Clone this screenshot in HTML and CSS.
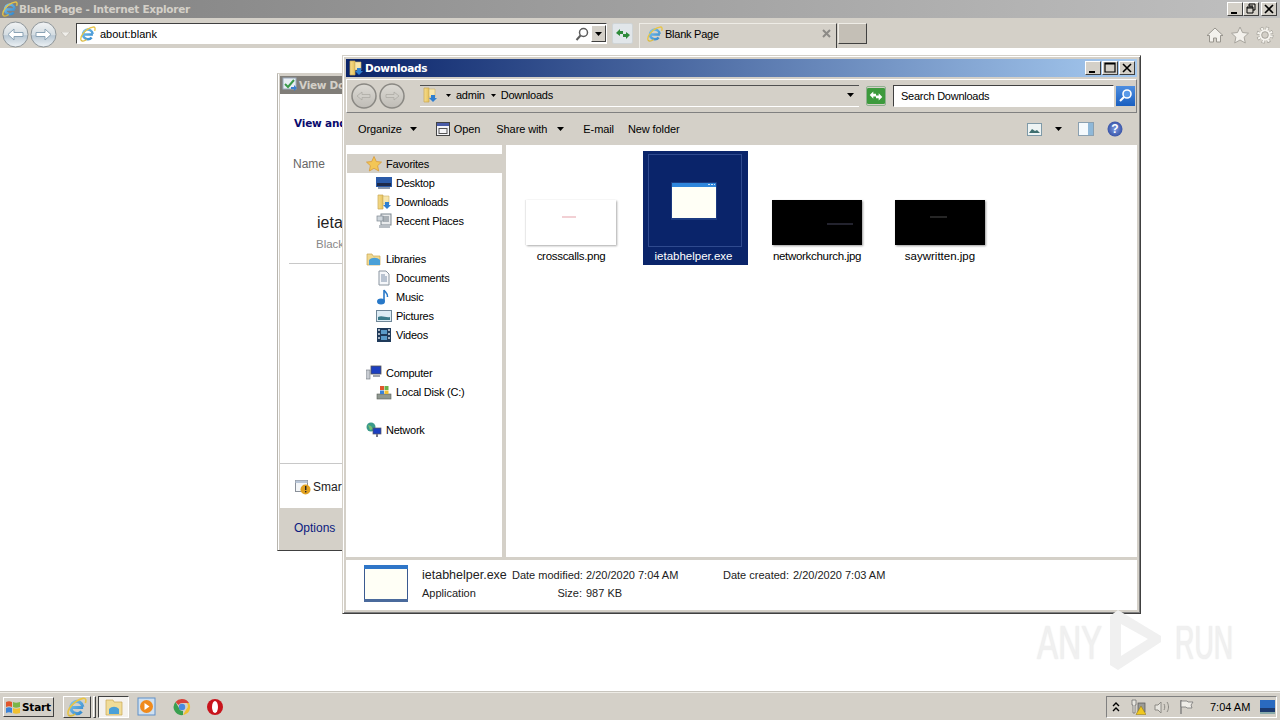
FILE: index.html
```html
<!DOCTYPE html>
<html lang="en">
<head>
<meta charset="utf-8">
<title>Blank Page - Internet Explorer</title>
<link rel="stylesheet" href="styles.css">
</head>
<body>
<svg class="defs" aria-hidden="true">
  <defs>
    <linearGradient id="navg" x1="0" y1="0" x2="0" y2="1"><stop offset="0" stop-color="#f2f4f5"/><stop offset=".5" stop-color="#d5dde2"/><stop offset=".55" stop-color="#b9c8d4"/><stop offset="1" stop-color="#eef3f6"/></linearGradient>
    <linearGradient id="navd" x1="0" y1="0" x2="0" y2="1"><stop offset="0" stop-color="#dcdad4"/><stop offset="1" stop-color="#bfbcb6"/></linearGradient>
    <linearGradient id="blueb" x1="0" y1="0" x2="0" y2="1"><stop offset="0" stop-color="#4d8ee0"/><stop offset="1" stop-color="#1a5fc0"/></linearGradient>
    <linearGradient id="folderg" x1="0" y1="0" x2="1" y2="0"><stop offset="0" stop-color="#f5dc8e"/><stop offset="1" stop-color="#e8c35c"/></linearGradient>
    <linearGradient id="ieg" x1="0" y1="0" x2="1" y2="1"><stop offset="0" stop-color="#7cc4ee"/><stop offset="1" stop-color="#2f86cc"/></linearGradient>
    <radialGradient id="helpg"><stop offset="0" stop-color="#7d9be0"/><stop offset="1" stop-color="#3a55a8"/></radialGradient>
    <symbol id="ie" viewBox="0 0 18 18">
      <path d="M4 9.500h10.500M14.300 8.800a5.500 5.500 0 1 0-1.200 4.200" fill="none" stroke="url(#ieg)" stroke-width="2.800"/>
      <path d="M1.200 16C-.5 12 6 3 14.500 1.200c2.300-.5 3 1.300 2 4.300" fill="none" stroke="#e8c547" stroke-width="1.500"/>
      <path d="M1.200 16c1.200 1.700 4 .8 6.300-.8" fill="none" stroke="#d9b93e" stroke-width="1.500"/>
    </symbol>
    <symbol id="folder-dl" viewBox="0 0 16 16">
      <path d="M2 1h5v14H2z" fill="url(#folderg)" stroke="#c8a850" stroke-width=".7"/>
      <path d="M7 2h6v8H7z" fill="#f7e6ad" stroke="#cdb168" stroke-width=".6"/>
      <path d="M9 8h4v3h2l-4 4-4-4h2z" fill="#2f7fd0"/>
    </symbol>
    <symbol id="star" viewBox="0 0 16 16"><path d="M8 .5l2.300 5 5.200.6-3.900 3.600 1.100 5.300L8 12.300 3.300 15l1.100-5.300L.5 6.100l5.200-.6z" fill="#f3c655" stroke="#d89a3a" stroke-width=".8"/></symbol>
    <symbol id="caret" viewBox="0 0 7 4"><path d="M0 0h7L3.500 4z" fill="#000"/></symbol>
  </defs>
</svg>

<div class="ie">
  <header class="ie-title">
    <svg class="i16"><use href="#ie"/></svg>
    <span class="ie-title-text">Blank Page - Internet Explorer</span>
    <div class="caption ie-caption">
      <span class="cap-btn"><svg viewBox="0 0 14 12"><rect x="3" y="9" width="6" height="2"/></svg></span>
      <span class="cap-btn"><svg viewBox="0 0 14 12"><path d="M5 1h6v6H9M5 1v2h4v0M3 4h6v6H3zM3 5h6" fill="none" stroke="#000"/></svg></span>
      <span class="cap-btn cap-close"><svg viewBox="0 0 14 12"><path d="M3 2l8 8M11 2l-8 8" stroke="#000" stroke-width="1.600"/></svg></span>
    </div>
  </header>

  <div class="ie-bar">
    <div class="nav-pair">
      <svg class="nav-btn" viewBox="0 0 27 27"><circle cx="13.500" cy="13.500" r="12.500" fill="url(#navg)" stroke="#8f969a"/><path d="M6 13.500l6-5.500v3.500h9v4h-9V19z" fill="#fff" stroke="#8ba3b5"/></svg>
      <svg class="nav-btn" viewBox="0 0 27 27"><circle cx="13.500" cy="13.500" r="12.500" fill="url(#navg)" stroke="#8f969a"/><path d="M21 13.500l-6-5.500v3.500H6v4h9V19z" fill="#fff" stroke="#8ba3b5"/></svg>
      <svg class="nav-drop" viewBox="0 0 9 5"><path d="M0 0h9L4.500 5z" fill="#f0eeea" stroke="#b0aca4" stroke-width=".5"/></svg>
    </div>
    <div class="ie-addr">
      <svg class="i16 addr-ie"><use href="#ie"/></svg>
      <span class="addr-text">about:blank</span>
      <svg class="addr-search" viewBox="0 0 14 14"><circle cx="8.500" cy="5.500" r="4" fill="none" stroke="#5c5c5c" stroke-width="1.500"/><path d="M5.500 8.500L1.500 13" stroke="#5c5c5c" stroke-width="2"/></svg>
      <span class="addr-drop"><svg class="caret" viewBox="0 0 7 4"><use href="#caret"/></svg></span>
    </div>
    <span class="ie-refresh">
      <svg viewBox="0 0 16 12"><path d="M1 5l4-4v2h3v3H5v2zM15 7l-4 4V9H8V6h3V4z" fill="#2e8b3a"/></svg>
    </span>
    <div class="ie-tab">
      <svg class="i16 tab-ie"><use href="#ie"/></svg>
      <span class="tab-text">Blank Page</span>
      <svg class="tab-x" viewBox="0 0 9 9"><path d="M1 1l7 7M8 1L1 8" stroke="#8c8a86" stroke-width="2"/></svg>
    </div>
    <span class="ie-newtab"></span>
    <div class="ie-tools">
      <svg viewBox="0 0 18 18"><path d="M9 2L1 9.500h2.500V16h4v-4h3v4h4V9.500H17z" fill="#f3f1ec" stroke="#98958e"/></svg>
      <svg viewBox="0 0 18 18"><path d="M9 1l2.500 5.500 6 .7-4.400 4 1.200 5.800L9 14l-5.300 3 1.200-5.800-4.400-4 6-.7z" fill="#f3f1ec" stroke="#a8a59e"/></svg>
      <svg viewBox="0 0 18 18"><circle cx="9" cy="9" r="6.500" fill="none" stroke="#9c9992" stroke-width="4" stroke-dasharray="2.800 2.300"/><circle cx="9" cy="9" r="6.500" fill="none" stroke="#f6f4ef" stroke-width="2.800" stroke-dasharray="2 3.100" stroke-dashoffset="-.4"/><circle cx="9" cy="9" r="4.500" fill="none" stroke="#f6f4ef" stroke-width="2"/><circle cx="9" cy="9" r="3.300" fill="none" stroke="#9c9992" stroke-width=".8"/></svg>
    </div>
  </div>

  <main class="desktop">
    <section class="win view-win">
      <div class="view-title">
        <svg class="i16" viewBox="0 0 16 16"><rect x="1" y="1" width="13" height="11" fill="#e8eef4" stroke="#9ab"/><path d="M3 7l3 3 6-7" fill="none" stroke="#3a9a4a" stroke-width="2"/><path d="M9 10h3v-2l3 3-3 3v-2H9z" fill="#3a7fd0"/></svg>
        <span>View Do</span>
      </div>
      <div class="view-body">
        <h2 class="view-head">View and</h2>
        <div class="view-col">Name</div>
        <div class="view-item">
          <div class="view-name">ieta</div>
          <div class="view-src">Black</div>
        </div>
        <div class="view-spacer"></div>
        <div class="view-smart">
          <svg class="i16" viewBox="0 0 16 16"><rect x=".5" y="1.500" width="12" height="11" fill="#f4f6f8" stroke="#8a9099"/><rect x=".5" y="1.500" width="12" height="2.500" fill="#b9c6d8"/><circle cx="10.500" cy="10.500" r="5" fill="#e0a020"/><rect x="10" y="7" width="1.400" height="4" fill="#222"/><rect x="10" y="12" width="1.400" height="1.400" fill="#222"/></svg>
          <span>Smar</span>
        </div>
        <div class="view-foot">Options</div>
      </div>
    </section>

    <section class="win explorer">
      <div class="ex-title">
        <svg class="i16"><use href="#folder-dl"/></svg>
        <span class="ex-title-text">Downloads</span>
        <div class="caption ex-caption">
          <span class="cap-btn"><svg viewBox="0 0 14 12"><rect x="3" y="9" width="6" height="2"/></svg></span>
          <span class="cap-btn"><svg viewBox="0 0 14 12"><path d="M2 1h10v9H2zM2 2h10" fill="none" stroke="#000" stroke-width="1.200"/></svg></span>
          <span class="cap-btn cap-close"><svg viewBox="0 0 14 12"><path d="M3 2l8 8M11 2l-8 8" stroke="#000" stroke-width="1.600"/></svg></span>
        </div>
      </div>

      <div class="ex-nav">
        <div class="ex-backfwd">
          <svg class="ex-nb" viewBox="0 0 26 26"><circle cx="13" cy="13" r="12" fill="url(#navd)" stroke="#8a8883" stroke-width="1.500"/><path d="M6 13l5-4v2.500h8v3h-8V17z" fill="#d0cec8" stroke="#a9a7a1" stroke-width=".7"/></svg>
          <svg class="ex-nb" viewBox="0 0 26 26"><circle cx="13" cy="13" r="12" fill="url(#navd)" stroke="#8a8883" stroke-width="1.500"/><path d="M20 13l-5-4v2.500H7v3h8V17z" fill="#d0cec8" stroke="#a9a7a1" stroke-width=".7"/></svg>
        </div>
        <div class="ex-addr">
          <svg class="i16 crumb-ic"><use href="#folder-dl"/></svg>
          <svg class="caret-s" viewBox="0 0 7 4"><use href="#caret"/></svg>
          <span class="crumb">admin</span>
          <svg class="caret-s" viewBox="0 0 7 4"><use href="#caret"/></svg>
          <span class="crumb">Downloads</span>
          <svg class="caret crumb-drop" viewBox="0 0 7 4"><use href="#caret"/></svg>
        </div>
        <span class="ex-refresh"><svg viewBox="0 0 20 18"><rect width="20" height="18" rx="1.500" fill="#3d9a3d"/><path d="M3 8l4-4v2.500h3v3H7V12zM17 10l-4 4v-2.500h-3v-3h3V6z" fill="#fff"/></svg></span>
        <div class="ex-search">Search Downloads</div>
        <span class="ex-sbtn"><svg viewBox="0 0 19 20"><rect width="19" height="20" fill="url(#blueb)"/><circle cx="11" cy="8" r="4" fill="#5a9ae8" stroke="#fff" stroke-width="1.600"/><path d="M8 11l-4 4" stroke="#fff" stroke-width="2.200"/></svg></span>
      </div>

      <div class="ex-cmd">
        <span class="cmd cmd-org">Organize</span><svg class="caret cmd-c1" viewBox="0 0 7 4"><use href="#caret"/></svg>
        <svg class="cmd-open" viewBox="0 0 14 14"><rect x=".5" y=".5" width="13" height="13" fill="#f5f5f8" stroke="#444"/><rect x="1" y="1" width="12" height="3" fill="#4a5ca8"/><rect x="3" y="6.500" width="8" height="5" fill="none" stroke="#555"/></svg>
        <span class="cmd cmd-o">Open</span>
        <span class="cmd cmd-s">Share with</span><svg class="caret cmd-c2" viewBox="0 0 7 4"><use href="#caret"/></svg>
        <span class="cmd cmd-e">E-mail</span>
        <span class="cmd cmd-n">New folder</span>
        <div class="cmd-right">
          <svg class="cmd-view" viewBox="0 0 15 13"><rect x=".5" y=".5" width="14" height="12" fill="#eef4f4" stroke="#7f9aa8"/><path d="M2 10l3-4 3 2 2-1 3 3z" fill="#3f6f6f"/></svg>
          <svg class="caret cmd-c3" viewBox="0 0 7 4"><use href="#caret"/></svg>
          <svg class="cmd-pane" viewBox="0 0 16 14"><rect x=".5" y=".5" width="15" height="13" fill="#f5fafd" stroke="#8ba0b0"/><rect x="10" y="1" width="5" height="12" fill="#8fb8d8"/></svg>
          <svg class="cmd-help" viewBox="0 0 16 16"><circle cx="8" cy="8" r="7.500" fill="url(#helpg)"/><text x="8" y="12" class="help-q">?</text></svg>
        </div>
      </div>

      <div class="ex-main">
        <nav class="ex-side">
          <div class="side-row side-sel l1"><svg class="i16"><use href="#star"/></svg>Favorites</div>
          <div class="side-row l2"><svg class="i16" viewBox="0 0 16 16"><rect x="0" y="2" width="16" height="10" fill="#2a5aa8"/><rect x="1" y="8" width="14" height="3" fill="#1d2a4a"/><rect x="2" y="12" width="12" height="2" fill="#8a98ac"/></svg>Desktop</div>
          <div class="side-row l2"><svg class="i16"><use href="#folder-dl"/></svg>Downloads</div>
          <div class="side-row l2"><svg class="i16" viewBox="0 0 16 16"><rect x="5" y="1" width="10" height="11" fill="#e8eaec" stroke="#7d8790"/><rect x="1" y="3" width="6" height="5" fill="#cfd6dc" stroke="#7d8790" stroke-width=".7"/><path d="M7 4h6M7 6h6M7 8h6" stroke="#6a7680"/><rect x="3" y="12" width="11" height="3" fill="#b8bec4"/></svg>Recent Places</div>
          <div class="side-gap"></div>
          <div class="side-row l1"><svg class="i16" viewBox="0 0 16 16"><path d="M1 14V3h5l1 2h7v9z" fill="#f0d890" stroke="#c8a850" stroke-width=".7"/><path d="M3 14V9c3-3 8-3 11 0v5z" fill="#4aa0d8"/></svg>Libraries</div>
          <div class="side-row l2"><svg class="i16" viewBox="0 0 16 16"><path d="M3 1h7l3 3v11H3z" fill="#f5f7fa" stroke="#8a95a0"/><path d="M5 5h4M5 7h6M5 9h6M5 11h6" stroke="#7d8fa8"/></svg>Documents</div>
          <div class="side-row l2"><svg class="i16" viewBox="0 0 16 16"><ellipse cx="5" cy="12.500" rx="4" ry="3" fill="#2878c8"/><path d="M8 12V1c1 2 4 3 3.500 7" fill="none" stroke="#2878c8" stroke-width="1.600"/></svg>Music</div>
          <div class="side-row l2"><svg class="i16" viewBox="0 0 16 16"><rect x=".5" y="2.500" width="15" height="11" fill="#dcebf4" stroke="#6f8798"/><path d="M2 12V9c4-2 8 1 12 0v3z" fill="#3a7a8a"/></svg>Pictures</div>
          <div class="side-row l2"><svg class="i16" viewBox="0 0 16 16"><rect x="1" y="1" width="14" height="14" fill="#1f3a5a"/><path d="M3 2v2M3 6v2M3 10v2M13 2v2M13 6v2M13 10v2" stroke="#d5dde5" stroke-width="1.500"/><rect x="5" y="3" width="6" height="4" fill="#5a9ac8"/><rect x="5" y="9" width="6" height="4" fill="#5a9ac8"/></svg>Videos</div>
          <div class="side-gap"></div>
          <div class="side-row l1"><svg class="i16" viewBox="0 0 16 16"><rect x="0" y="5" width="4" height="9" fill="#c8ccd2" stroke="#70767e" stroke-width=".6"/><rect x="5" y="1" width="10" height="8" fill="#1c3fc0" stroke="#555" stroke-width=".8"/><rect x="7" y="10" width="7" height="2" fill="#a0a4ac"/></svg>Computer</div>
          <div class="side-row l2"><svg class="i16" viewBox="0 0 16 16"><rect x="1" y="10" width="14" height="5" fill="#8f9890" stroke="#5a6058" stroke-width=".6"/><rect x="4" y="2" width="4" height="4" fill="#e0562c"/><rect x="8.500" y="2" width="4" height="4" fill="#6ab04a"/><rect x="4" y="6.500" width="4" height="3.500" fill="#3a82d8"/><rect x="8.500" y="6.500" width="4" height="3.500" fill="#f0c030"/></svg>Local Disk (C:)</div>
          <div class="side-gap"></div>
          <div class="side-row l1"><svg class="i16" viewBox="0 0 16 16"><circle cx="5" cy="5" r="4.500" fill="#3a9a8a"/><path d="M2 3l3 1 2 3-3 1z" fill="#7ac070"/><rect x="7" y="6" width="8" height="6" fill="#1c3fc0" stroke="#556" stroke-width=".7"/><rect x="10" y="12" width="2" height="3" fill="#778"/></svg>Network</div>
        </nav>
        <div class="ex-split"></div>
        <div class="ex-files">
          <figure class="tile">
            <div class="thumb thumb-light"><span class="thumb-mark mark-red"></span></div>
            <figcaption class="cap-narrow">crosscalls.png</figcaption>
          </figure>
          <figure class="tile tile-sel">
            <div class="tile-focus"></div>
            <svg class="app-icon" viewBox="0 0 46 38"><rect x="0" y="0" width="46" height="38" fill="#1b3a80"/><rect x="1" y="1" width="44" height="5" fill="#2f86dc"/><rect x="1" y="5" width="44" height="31" fill="#fffff6"/><path d="M37 2.500h2M40 2.500h2M43 2.500h1" stroke="#cfe4f6"/></svg>
            <figcaption>ietabhelper.exe</figcaption>
          </figure>
          <figure class="tile">
            <div class="thumb thumb-dark"><span class="thumb-mark mark-blue"></span></div>
            <figcaption class="cap-narrow">networkchurch.jpg</figcaption>
          </figure>
          <figure class="tile">
            <div class="thumb thumb-dark"><span class="thumb-mark mark-grey"></span></div>
            <figcaption>saywritten.jpg</figcaption>
          </figure>
        </div>
      </div>

      <div class="ex-sep"></div>
      <div class="ex-status">
        <svg class="status-icon" viewBox="0 0 44 37"><rect x=".5" y=".5" width="43" height="36" fill="#fffff6" stroke="#3a5a90"/><rect x="0" y="0" width="44" height="4" fill="#2f76c8"/><rect x="0" y="34" width="44" height="3" fill="#4a6a9c"/></svg>
        <div class="status-grid">
          <span class="st-title">ietabhelper.exe</span>
          <span class="st-label">Date modified:</span>
          <span>2/20/2020 7:04 AM</span>
          <span class="st-label">Date created:</span>
          <span>2/20/2020 7:03 AM</span>
          <span>Application</span>
          <span class="st-label">Size:</span>
          <span>987 KB</span>
        </div>
      </div>
    </section>

    <div class="watermark">
      <span class="wm-any">ANY</span>
      <svg class="wm-play" viewBox="0 0 56 60"><path fill-rule="evenodd" d="M4 6l8-6 43 26v6L12 60l-8-5zM15 14v32l27-17z" fill="#f0f0f0"/></svg>
      <span class="wm-run">RUN</span>
    </div>
  </main>

  <footer class="taskbar">
    <button class="start"><svg class="i16" viewBox="0 0 16 16"><path d="M1 3c2-1 4-1 6 0v5C5 7 3 7 1 8z" fill="#e0562c"/><path d="M8 3c2 1 4 1 7 0v5c-3 1-5 1-7 0z" fill="#7ab648"/><path d="M1 9c2-1 4-1 6 0v5c-2-1-4-1-6 0z" fill="#3a82d8"/><path d="M8 9c2 1 4 1 7 0v5c-3 1-5 1-7 0z" fill="#f0c030"/></svg>Start</button>
    <span class="task-btn task-ie"><svg class="i20"><use href="#ie"/></svg></span>
    <span class="task-sep"></span>
    <span class="task-btn task-ex"><svg class="i20" viewBox="0 0 20 20"><path d="M2 3h7l1 2h8v13H2z" fill="#f0dc98" stroke="#c8a850" stroke-width=".7"/><path d="M5 17v-5c3-3 7-3 10 0v5z" fill="#4aa0d8"/></svg></span>
    <svg class="task-media i20" viewBox="0 0 20 20"><rect x="1" y="1" width="17" height="17" fill="#cfe0f0" stroke="#5f8fc8"/><circle cx="9.500" cy="9.500" r="6.500" fill="#f08a1c"/><path d="M7.500 6l5 3.500-5 3.500z" fill="#fff"/></svg>
    <svg class="task-chrome i20" viewBox="0 0 20 20"><path d="M10 2a8 8 0 0 1 7 4H10a4 4 0 0 0-3.500 2L3.500 5A8 8 0 0 1 10 2z" fill="#d8443a"/><path d="M17 6a8 8 0 0 1-6 12l3.500-6a4 4 0 0 0 0-6z" fill="#f0c030"/><path d="M3.500 5l3.500 6a4 4 0 0 0 4 3v4A8 8 0 0 1 3.500 5z" fill="#3aa050"/><circle cx="10" cy="10" r="3.200" fill="#4a8ae0"/></svg>
    <svg class="task-opera i20" viewBox="0 0 20 20"><circle cx="10" cy="10" r="8" fill="#c8141c"/><ellipse cx="10" cy="10" rx="3" ry="6" fill="#fff"/></svg>
    <div class="tray">
      <svg class="tray-chev" viewBox="0 0 8 10"><path d="M1 4l3-3 3 3M1 9l3-3 3 3" fill="none" stroke="#000" stroke-width="1.400"/></svg>
      <svg class="tray-net" viewBox="0 0 16 16"><path d="M2 1h4v5H5v8H3V6H2z" fill="#e8e6e0" stroke="#666" stroke-width=".7"/><rect x="8" y="4" width="7" height="9" fill="#9a9a96" stroke="#555" stroke-width=".7"/><path d="M11 7l5 8.500H6z" fill="#f0c820" stroke="#8a7010" stroke-width=".5"/></svg>
      <svg class="tray-vol" viewBox="0 0 16 16"><path d="M1 6h3l3-3v11l-3-3H1z" fill="#e8e6e0" stroke="#8c8a84"/><path d="M10 5c1 2 1 4 0 6M13 3c2 3 2 7 0 10" fill="none" stroke="#8c8a84"/></svg>
      <svg class="tray-flag" viewBox="0 0 16 16"><path d="M3 1v14" stroke="#777" stroke-width="1.300"/><path d="M3 2h6l1 1h5l-2 3 1 3H9L8 8H3z" fill="#efede8" stroke="#777" stroke-width=".8"/></svg>
      <span class="tray-time">7:04 AM</span>
      <svg class="tray-desk" viewBox="0 0 15 14"><rect width="15" height="12" fill="#2a6ac0"/><rect y="8" width="15" height="4" fill="#1c3a70"/><rect y="12" width="15" height="2" fill="#8aa"/></svg>
    </div>
  </footer>
</div>
</body>
</html>
```

FILE: styles.css
```css
* { box-sizing: border-box; }
html, body { margin: 0; height: 100%; overflow: hidden; }
body { font-family: "Liberation Sans", Arial, sans-serif; font-size: 11px; color: #000; background: #fff; }
.defs { position: absolute; width: 0; height: 0; }
svg { display: block; flex: none; }
.i16 { width: 16px; height: 16px; }
.i20 { width: 20px; height: 20px; }
.caret { width: 7px; height: 4px; }
.caret-s { width: 5px; height: 3px; }

.ie { display: flex; flex-direction: column; height: 720px; width: 1280px; }

/* IE title */
.ie-title { height: 18px; display: flex; align-items: center; padding: 0 3px 0 2px; background: linear-gradient(90deg, #808080, #c0c0c0); }
.ie-title-text { margin-left: 1px; font: bold 10.5px "DejaVu Sans", sans-serif; letter-spacing: -.28px; color: #d4d0c8; }
.caption { display: flex; margin-left: auto; gap: 0; }
.cap-btn { width: 16px; height: 14px; background: #d4d0c8; border: 1px solid; border-color: #fff #404040 #404040 #fff; }
.cap-btn svg { width: 14px; height: 12px; }
.cap-close { margin-left: 2px; }

/* IE toolbar */
.ie-bar { height: 30px; background: #d4d0c8; display: flex; align-items: flex-start; padding: 0 6px 0 2px; }
.nav-pair { display: flex; align-items: center; height: 30px; }
.nav-btn { width: 27px; height: 27px; margin-right: 1px; margin-top: 2px; }
.nav-drop { width: 9px; height: 5px; margin: 2px 7px 0 3px; }
.ie-addr { width: 531px; height: 21px; margin-top: 5px; margin-left: -1px; background: #fff; border: 1px solid; border-color: #404040 #fff #fff #404040; display: flex; align-items: center; padding-left: 3px; }
.addr-text { margin-left: 4px; }
.addr-search { width: 14px; height: 14px; margin-left: auto; margin-right: 2px; }
.addr-drop { width: 15px; height: 17px; display: flex; align-items: center; justify-content: center; background: #d4d0c8; border: 1px solid; border-color: #fff #404040 #404040 #fff; }
.ie-refresh { width: 21px; height: 21px; margin: 5px 6px 0 5px; display: flex; align-items: center; justify-content: center; background: #e1e6ea; border: 1px solid #cfd4d6; border-radius: 2px; }
.ie-refresh svg { width: 16px; height: 12px; }
.ie-tab { width: 198px; height: 25px; margin-top: 5px; display: flex; align-items: center; padding: 0 5px 5px 7px; border-left: 1px solid #eeece6; border-top: 1px solid #eeece6; border-right: 1px solid #404040; }
.tab-text { margin-left: 2px; letter-spacing: -.25px; }
.tab-x { width: 9px; height: 9px; margin-left: auto; }
.ie-newtab { width: 29px; height: 21px; margin: 5px 0 0 1px; background: #c4bfb6; border: 1px solid; border-color: #eeece6 #404040 #404040 #eeece6; }
.ie-tools { margin-left: auto; margin-top: 8px; display: flex; gap: 7px; }
.ie-tools svg { width: 18px; height: 18px; }

/* Desktop canvas */
.desktop { position: relative; flex: 1; background: #fff; overflow: hidden; }
.win { position: absolute; background: #d4d0c8; }

/* Behind window */
.view-win { left: 277px; top: 25px; width: 72px; height: 478px; padding: 2px; border: 1px solid; border-color: #d4d0c8 #404040 #404040 #b8b5ae; box-shadow: inset 1px 0 0 #fff; display: flex; flex-direction: column; }
.view-title { height: 18px; background: #807d78; color: #d4d0c8; font: bold 10.5px "DejaVu Sans", sans-serif; letter-spacing: -.28px; display: flex; align-items: center; gap: 1px; padding-left: 2px; white-space: nowrap; }
.view-body { flex: 1; background: #fff; display: flex; flex-direction: column; min-height: 0; }
.view-head { margin: 23px 0 0 14px; font: bold 10.5px "DejaVu Sans", sans-serif; letter-spacing: -.2px; color: #0a0a6e; height: 14px; white-space: nowrap; }
.view-col { margin: 26px 0 0 13px; color: #666; font-size: 12px; height: 17px; }
.view-item { margin: 38px 0 0 9px; padding: 0 0 10px 27px; border-bottom: 1px solid #c8c8c8; white-space: nowrap; }
.view-name { font-size: 16px; line-height: 22px; color: #222; margin-left: 1px; }
.view-src { color: #888; font-size: 11.500px; line-height: 18px; margin-top: 1px; }
.view-spacer { flex: 1; border-bottom: 1px solid #c8c8c8; }
.view-smart { height: 44px; flex: none; display: flex; align-items: center; gap: 2px; padding: 2px 0 0 15px; font-size: 12px; white-space: nowrap; color: #222; }
.view-foot { height: 40px; flex: none; background: #d4d0c8; padding: 13px 0 0 14px; color: #0a1a80; font-size: 12px; }

/* Explorer */
.explorer { left: 342px; top: 7px; width: 799px; height: 559px; border: 1px solid; border-color: #d4d0c8 #404040 #404040 #d4d0c8; padding: 3px; box-shadow: inset 1px 1px 0 #fff, inset -1px -1px 0 #808080; display: flex; flex-direction: column; }
.ex-title { height: 18px; flex: none; background: linear-gradient(90deg, #0a246a, #a6caf0); display: flex; align-items: center; padding: 0 2px; }
.ex-title-text { margin-left: 1px; color: #fff; font: bold 10.5px "DejaVu Sans", sans-serif; letter-spacing: -.28px; }
.ex-caption .cap-btn + .cap-btn { margin-left: 1px; }
.ex-caption .cap-close { margin-left: 2px; }

.ex-nav { height: 34px; flex: none; margin-top: 2px; border: 1px solid; border-color: #fff #808080 #808080 #fff; display: flex; align-items: center; padding: 0 1px 0 4px; }
.ex-backfwd { display: flex; gap: 2px; }
.ex-nb { width: 26px; height: 26px; }
.ex-addr { width: 441px; height: 22px; margin-left: 15px; border-top: 1px solid #505050; border-bottom: 1px solid #fff; display: flex; align-items: center; padding: 0 0 2px 2px; }
.crumb-ic { margin-right: 8px; }
.crumb { margin: 0 6px 0 5px; letter-spacing: -.25px; }
.crumb-drop { margin-left: auto; margin-right: 5px; }
.ex-refresh { width: 20px; height: 20px; margin-left: 7px; display: flex; align-items: center; border: 1px solid #8fb08f; border-radius: 2px; }
.ex-refresh svg { width: 18px; height: 18px; }
.ex-search { width: 222px; height: 22px; margin-left: 7px; padding: 2px 0 0 7px; line-height: 16px; letter-spacing: -.25px; background: #fff; border: 1px solid; border-color: #404040 #fff #fff #404040; }
.ex-sbtn { width: 19px; height: 20px; margin-left: 2px; }
.ex-sbtn svg { width: 19px; height: 20px; }

.ex-cmd { height: 32px; flex: none; display: flex; align-items: center; }
.cmd { letter-spacing: -.1px; }
.cmd-org { margin-left: 12px; }
.cmd-c1 { margin-left: 8px; }
.cmd-open { width: 14px; height: 14px; margin-left: 19px; }
.cmd-o { margin-left: 4px; }
.cmd-s { margin-left: 16px; }
.cmd-c2 { margin-left: 10px; }
.cmd-e { margin-left: 19px; }
.cmd-n { margin-left: 14px; }
.cmd-right { margin-left: auto; display: flex; align-items: center; padding-right: 14px; }
.cmd-view { width: 15px; height: 13px; }
.cmd-c3 { margin-left: 13px; }
.cmd-pane { width: 16px; height: 14px; margin-left: 16px; }
.cmd-help { width: 16px; height: 16px; margin-left: 13px; }
.help-q { font: bold 12px "Liberation Sans", sans-serif; fill: #fff; text-anchor: middle; }

.ex-main { flex: 1; display: flex; min-height: 0; }
.ex-side { width: 156px; background: #fff; padding-top: 9px; flex: none; }
.side-row { height: 19px; display: flex; align-items: center; gap: 4px; letter-spacing: -.25px; }
.side-row.l1 { padding-left: 20px; }
.side-row.l2 { padding-left: 30px; }
.side-row.side-sel { background: #d4d0c8; margin-left: 1px; padding-left: 19px; }
.side-gap { height: 19px; }
.ex-split { width: 4px; flex: none; }
.ex-files { flex: 1; background: #fff; display: flex; gap: 18px; padding: 6px 0 0 13px; align-items: flex-start; }

.tile { width: 105px; height: 114px; margin: 0; display: flex; flex-direction: column; align-items: center; justify-content: flex-end; padding: 0 1px 0 0; position: relative; font-size: 11.500px; }
.tile figcaption { line-height: 21px; height: 19px; white-space: nowrap; }
.tile .cap-narrow { letter-spacing: -.3px; }
.thumb { width: 90px; height: 45px; margin-bottom: 1px; position: relative; box-shadow: 1px 1px 2px #9a9a9a; }
.thumb-light { background: #fff; box-shadow: 1px 1px 2px #aaa, -1px 0 1px #eee; }
.thumb-dark { background: #000; }
.thumb-mark { position: absolute; height: 2px; }
.mark-red { left: 36px; top: 16px; width: 14px; background: #f2d0d4; }
.mark-blue { left: 55px; top: 23px; width: 26px; background: #23232e; }
.mark-grey { left: 35px; top: 16px; width: 17px; background: #262626; }
.tile-sel { background: #0a246a; color: #fff; margin: 0 -1px 0 1px; padding-right: 4px; }
.tile-focus { position: absolute; left: 5px; top: 3px; width: 94px; height: 93px; border: 1px solid #2f4a8e; }
.app-icon { width: 46px; height: 38px; margin-bottom: 26px; position: relative; }

.ex-sep { height: 3px; flex: none; }
.ex-status { height: 50px; flex: none; background: #fff; display: flex; padding: 5px 0 0 18px; }
.status-icon { width: 44px; height: 37px; }
.status-grid { margin-left: 14px; display: grid; grid-template-columns: 90px 74px 136px 71px auto; grid-auto-rows: 18px; padding-top: 1px; white-space: nowrap; line-height: 18px; color: #222; }
.st-label { text-align: right; padding-right: 4px; }
.st-title { font-size: 12.500px; }

/* Watermark */
.watermark { position: absolute; left: 1037px; top: 563px; display: flex; align-items: center; color: #f0f0f0; font: 48px/64px "Liberation Sans", sans-serif; text-shadow: 0 0 2px #e6e6e6; }
.wm-any { display: inline-block; width: 69px; transform: scaleX(.66); transform-origin: left center; white-space: nowrap; }
.wm-run { display: inline-block; width: 60px; margin-left: 13px; transform: scaleX(.56); transform-origin: left center; white-space: nowrap; }
.wm-play { width: 56px; height: 60px; margin-top: -6px; }

/* Taskbar */
.taskbar { height: 28px; flex: none; background: #d4d0c8; border-top: 1px solid #eeece6; box-shadow: 0 -1px 0 #c8c5be; display: flex; align-items: center; padding-left: 3px; position: relative; }
.start { width: 51px; height: 20px; margin: 1px 0 0 0; padding: 0 0 0 1px; display: flex; align-items: center; gap: 1px; background: #d4d0c8; border: 1px solid; border-color: #fff #404040 #404040 #fff; font: bold 10.5px "DejaVu Sans", sans-serif; letter-spacing: -.2px; color: #000; }
.task-btn { display: flex; align-items: center; justify-content: center; height: 22px; }
.task-ie { width: 28px; margin-left: 9px; border: 1px solid; border-color: #fff #404040 #404040 #fff; }
.task-sep { width: 3px; height: 22px; margin: 0 2px; background: #d4d0c8; border: 1px solid; border-color: #fff #404040 #404040 #fff; }
.task-ex { width: 31px; height: 22px; background: #f4f2ee; border: 1px solid; border-color: #404040 #fff #fff #404040; }
.task-media { margin-left: 8px; }
.task-chrome { margin-left: 15px; }
.task-opera { margin-left: 13px; }
.tray { margin-left: auto; margin-right: 3px; width: 171px; height: 22px; border: 1px solid; border-color: #808080 #fff #fff #808080; display: flex; align-items: center; padding-left: 5px; }
.tray-chev { width: 8px; height: 10px; }
.tray-net { width: 16px; height: 16px; margin-left: 10px; }
.tray-vol { width: 16px; height: 16px; margin-left: 8px; }
.tray-flag { width: 16px; height: 16px; margin-left: 8px; }
.tray-time { margin-left: 16px; white-space: nowrap; }
.tray-desk { width: 15px; height: 14px; margin-left: auto; margin-right: 1px; }
```
